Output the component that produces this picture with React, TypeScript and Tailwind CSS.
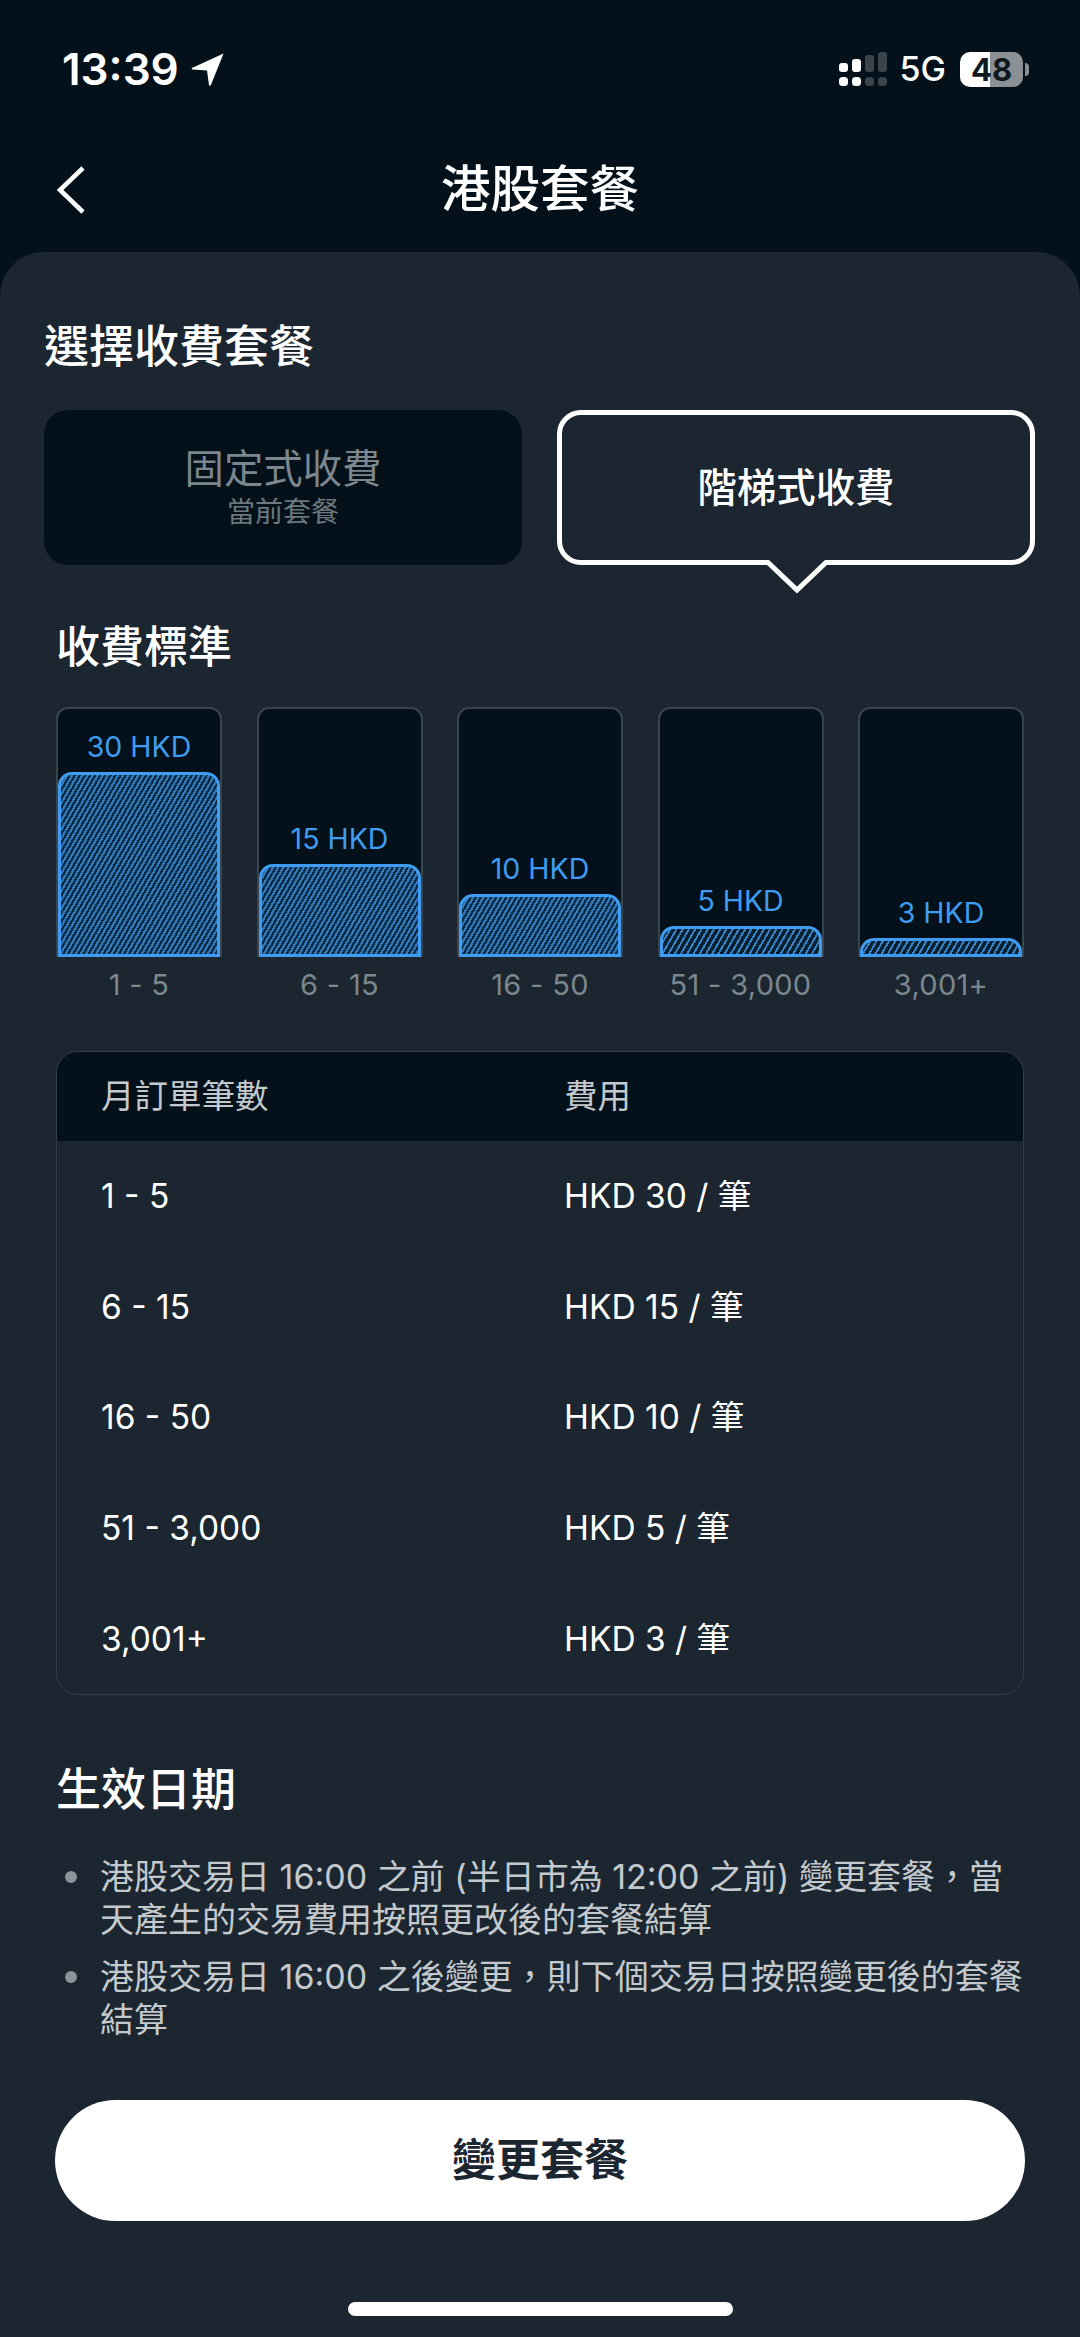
const tiers = [
  { value: "30 HKD", range: "1 - 5", fillClass: "h-[185px] bg-[repeating-linear-gradient(120deg,#2f78ba_0px,#2f78ba_2.2px,#0c2a41_2.2px,#0c2a41_4.4px)]", fee: "HKD 30 / 筆" },
  { value: "15 HKD", range: "6 - 15", fillClass: "h-[93px] bg-[repeating-linear-gradient(120deg,#2f78ba_0px,#2f78ba_2.2px,#0c2a41_2.2px,#0c2a41_4.4px)]", fee: "HKD 15 / 筆" },
  { value: "10 HKD", range: "16 - 50", fillClass: "h-[63px] bg-[repeating-linear-gradient(120deg,#2f78ba_0px,#2f78ba_2.2px,#0c2a41_2.2px,#0c2a41_4.4px)]", fee: "HKD 10 / 筆" },
  { value: "5 HKD", range: "51 - 3,000", fillClass: "h-[31px] bg-[repeating-linear-gradient(120deg,#3380c4_0px,#3380c4_2px,#07202f_2px,#07202f_5.4px)]", fee: "HKD 5 / 筆" },
  { value: "3 HKD", range: "3,001+", fillClass: "h-[19px] bg-[repeating-linear-gradient(120deg,#3380c4_0px,#3380c4_2px,#07202f_2px,#07202f_5.4px)]", fee: "HKD 3 / 筆" },
];

function SignalIcon() {
  return (
    <svg width="48" height="35" viewBox="0 0 48 35" className="mr-[13px]">
      <rect x="0" y="11" width="9" height="9" rx="3" fill="#fff" />
      <rect x="13" y="7" width="9" height="13" rx="3" fill="#fff" />
      <rect x="26" y="3" width="9" height="17" rx="3" fill="#3a444c" />
      <rect x="39" y="0" width="9" height="20" rx="3" fill="#3a444c" />
      <rect x="0" y="25" width="9" height="9" rx="3.5" fill="#fff" />
      <rect x="13" y="25" width="9" height="9" rx="3.5" fill="#fff" />
      <rect x="26" y="25" width="9" height="9" rx="3.5" fill="#3a444c" />
      <rect x="39" y="25" width="9" height="9" rx="3.5" fill="#3a444c" />
    </svg>
  );
}

function StatusBar() {
  return (
    <div className="flex h-[36px] items-center justify-between pl-[62px] pr-[51px] text-white">
      <div className="flex items-center gap-[12px]">
        <span className="text-[44px] font-semibold leading-none">13:39</span>
        <svg width="34" height="33" viewBox="0 0 34 34">
          <path d="M33 0.5 L0.5 15.5 C0 16 0.2 17 1 17 L16 18 L18 33 C18 34 19.5 34 20 33 Z" fill="#fff" />
        </svg>
      </div>
      <div className="flex items-center">
        <SignalIcon />
        <span className="mr-[14px] text-[34px] font-medium leading-none">5G</span>
        <div className="flex h-[35px] w-[63px] items-center justify-center rounded-[10px] bg-[linear-gradient(90deg,#ffffff_48%,#8b9095_48%)] text-[31px] font-bold leading-none text-[#101820]">
          48
        </div>
        <div className="ml-[2px] h-[13px] w-[4px] rounded-r-full bg-[#8b9095]" />
      </div>
    </div>
  );
}

function PlanCards() {
  return (
    <div className="mt-[38px] grid grid-cols-2 gap-[35px] pl-[44px] pr-[45px]">
      <div className="flex h-[155px] flex-col items-center justify-center rounded-[24px] bg-[#04111a]">
        <p className="text-[39.4px] leading-[46px] text-[#7b868d]">固定式收費</p>
        <p className="mt-[3px] text-[28px] leading-[34px] text-[#6d777e]">當前套餐</p>
      </div>
      <div className="relative flex h-[155px] items-center justify-center rounded-[24px] border-[5px] border-white pt-[2px]">
        <p className="text-[39.4px] font-medium leading-none text-white">階梯式收費</p>
        <svg width="66" height="36" viewBox="0 0 66 36" className="absolute bottom-[-36px] left-[202px]">
          <path d="M2 0 H64 V5 H63 L33 31 L3 5 H2 Z" fill="#1c2630" />
          <path d="M0 2.5 H4 L33 30 L62 2.5 H66" fill="none" stroke="#fff" strokeWidth="5" />
        </svg>
      </div>
    </div>
  );
}

function TierChart() {
  return (
    <div className="mt-[35px] flex justify-between px-[56px]">
      {tiers.map((tier) => (
        <div key={tier.range} className="flex w-[166px] flex-col items-center">
          <div className="flex h-[250px] w-full flex-col items-center justify-end rounded-t-[12px] border-x-2 border-t-2 border-[#3a444d] bg-[#04111a]">
            <span className="mb-[9px] text-[28.5px] leading-[32px] text-[#3f9cf0]">{tier.value}</span>
            <div className={`w-full rounded-t-[14px] border-[3px] border-[#3f9cf0] ${tier.fillClass}`} />
          </div>
          <span className="mt-[12px] text-[29px] leading-[32px] tracking-[0.3px] text-[#7b868d]">{tier.range}</span>
        </div>
      ))}
    </div>
  );
}

function FeeTable() {
  return (
    <div className="mx-[56px] mt-[50px] overflow-hidden rounded-[22px] border border-[#333e47]">
      <div className="flex h-[89px] items-center bg-[#04111a] text-[33.5px] text-[#c3c9cd]">
        <span className="w-[507px] pl-[44px]">月訂單筆數</span>
        <span>費用</span>
      </div>
      <div>
        {tiers.map((tier) => (
          <div key={tier.range} className="flex h-[110.6px] items-center text-[33.5px] text-white">
            <span className="w-[507px] pl-[44px]">{tier.range}</span>
            <span>{tier.fee}</span>
          </div>
        ))}
      </div>
    </div>
  );
}

const notes = [
  "港股交易日 16:00 之前 (半日市為 12:00 之前) 變更套餐，當天產生的交易費用按照更改後的套餐結算",
  "港股交易日 16:00 之後變更，則下個交易日按照變更後的套餐結算",
];

export default function App() {
  return (
    <div className="flex h-[2337px] w-[1080px] flex-col overflow-hidden bg-[#04111a] font-['Inter','Noto_Sans_CJK_TC',sans-serif]">
      <div className="h-[252px] pt-[51px]">
        <StatusBar />
        <div className="relative mt-[78px] flex h-[50px] items-center justify-center">
          <svg width="32" height="50" viewBox="0 0 32 50" className="absolute left-[55px] top-0">
            <path d="M28 3 L5 25 L28 47" fill="none" stroke="#fff" strokeWidth="4.5" />
          </svg>
          <h1 className="text-[49.5px] font-medium leading-none text-white">港股套餐</h1>
        </div>
      </div>

      <div className="flex flex-1 flex-col rounded-t-[44px] bg-[#1c2630]">
        <h2 className="mt-[70px] pl-[44px] text-[45px] font-medium leading-[50px] text-white">選擇收費套餐</h2>
        <PlanCards />
        <h2 className="mt-[57px] pl-[56px] text-[44px] font-medium leading-[50px] text-white">收費標準</h2>
        <TierChart />
        <FeeTable />
        <h2 className="mt-[70px] pl-[56px] text-[45px] font-medium leading-[50px] text-white">生效日期</h2>
        <ul className="mt-[40px] space-y-[14px] pl-[65px] pr-[56px]">
          {notes.map((note) => (
            <li key={note} className="flex gap-[23px] text-[34px] leading-[43px] text-[#c3c9cd]">
              <span className="mt-[16px] size-[12px] shrink-0 rounded-full bg-[#8b949a]" />
              <span>{note}</span>
            </li>
          ))}
        </ul>
        <button className="mx-[55px] mt-[59px] h-[121px] rounded-full bg-white text-[44px] font-semibold text-[#1c2630]">
          變更套餐
        </button>
        <div className="mx-auto mt-[81px] h-[14px] w-[385px] rounded-full bg-white" />
      </div>
    </div>
  );
}
